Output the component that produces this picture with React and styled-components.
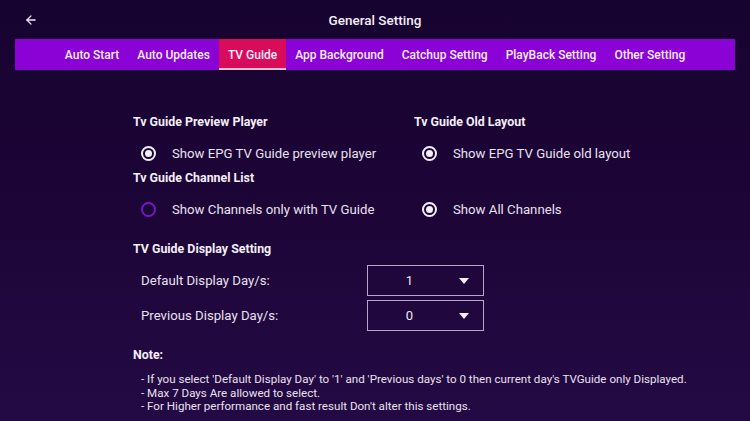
import React from "react";
import styled, { createGlobalStyle } from "styled-components";
import { ArrowLeft } from "lucide-react";

const tabs = [
  "Auto Start",
  "Auto Updates",
  "TV Guide",
  "App Background",
  "Catchup Setting",
  "PlayBack Setting",
  "Other Setting",
];

const notes = [
  "- If you select 'Default Display Day' to '1' and 'Previous days' to 0 then current day's TVGuide only Displayed.",
  "- Max 7 Days Are allowed to select.",
  "- For Higher performance and fast result Don't alter this settings.",
];

function Radio({ checked, label }) {
  return (
    <RadioRow>
      <RadioCircle checked={checked} />
      <RadioLabel>{label}</RadioLabel>
    </RadioRow>
  );
}

function Dropdown({ label, value }) {
  return (
    <DropRow>
      <DropLabel>{label}</DropLabel>
      <DropBox>
        <DropValue>{value}</DropValue>
        <DropArrow />
      </DropBox>
    </DropRow>
  );
}

export default function App() {
  return (
    <>
      <GlobalStyle />
      <Page>
        <Header>
          <BackButton>
            <ArrowLeft size={14} strokeWidth={2.2} />
          </BackButton>
          <Title>General Setting</Title>
          <span />
        </Header>
        <TabBar>
          {tabs.map((t) => (
            <Tab key={t} active={t === "TV Guide"}>
              {t}
            </Tab>
          ))}
        </TabBar>
        <Content>
          <OptionGrid>
            <Cell>
              <Heading>Tv Guide Preview Player</Heading>
              <Radio checked label="Show EPG TV Guide preview player" />
            </Cell>
            <Cell>
              <Heading>Tv Guide Old Layout</Heading>
              <Radio checked label="Show EPG TV Guide old layout" />
            </Cell>
            <Cell>
              <Heading>Tv Guide Channel List</Heading>
              <Radio label="Show Channels only with TV Guide" />
            </Cell>
            <Cell>
              <Heading />
              <Radio checked label="Show All Channels" />
            </Cell>
          </OptionGrid>

          <Section>
            <Heading>TV Guide Display Setting</Heading>
            <DropList>
              <Dropdown label="Default Display Day/s:" value="1" />
              <Dropdown label="Previous Display Day/s:" value="0" />
            </DropList>
          </Section>

          <NoteSection>
            <NoteTitle>Note:</NoteTitle>
            <NoteList>
              {notes.map((n) => (
                <NoteLine key={n}>{n}</NoteLine>
              ))}
            </NoteList>
          </NoteSection>
        </Content>
      </Page>
    </>
  );
}

const GlobalStyle = createGlobalStyle`
  html, body {
    margin: 0;
    padding: 0;
  }
  body {
    font-family: Roboto, "Noto Sans", "Liberation Sans", sans-serif;
    color: #f1e9f6;
  }
`;

const Page = styled.div`
  width: 750px;
  height: 421px;
  overflow: hidden;
  background: linear-gradient(180deg, #170330 0%, #1d0538 55%, #240a44 100%);
`;

const Header = styled.div`
  height: 39px;
  display: grid;
  grid-template-columns: 1fr auto 1fr;
  align-items: center;
`;

const BackButton = styled.div`
  display: flex;
  align-items: center;
  padding-left: 24px;
  color: #f1e9f6;
`;

const Title = styled.div`
  font-size: 13.5px;
  font-weight: 500;
  color: #f4eef8;
`;

const TabBar = styled.div`
  margin: 0 15px;
  height: 31px;
  background: #8a02d6;
  display: flex;
  justify-content: center;
  align-items: stretch;
`;

const Tab = styled.div`
  display: flex;
  align-items: center;
  padding: 0 9px;
  font-size: 12px;
  font-weight: 500;
  color: #f6eefb;
  background: ${(p) => (p.active ? "#d90b5b" : "transparent")};
  box-shadow: ${(p) => (p.active ? "inset 0 -2px 0 #f6bdd2" : "none")};
`;

const Content = styled.div`
  padding: 42px 0 0 133px;
`;

const OptionGrid = styled.div`
  display: grid;
  grid-template-columns: 281px auto;
`;

const Cell = styled.div`
  display: flex;
  flex-direction: column;
`;

const Heading = styled.div`
  height: 20px;
  line-height: 20px;
  margin-bottom: 6px;
  font-size: 12.4px;
  font-weight: 700;
  color: #f4eef8;
`;

const RadioRow = styled.div`
  height: 30px;
  display: flex;
  align-items: center;
  gap: 16px;
  padding-left: 8px;
`;

const RadioCircle = styled.span`
  box-sizing: border-box;
  width: 15px;
  height: 15px;
  border-radius: 50%;
  border: 2px solid ${(p) => (p.checked ? "#f4eef8" : "#7419c2")};
  display: flex;
  align-items: center;
  justify-content: center;
  &::after {
    content: "";
    width: 7px;
    height: 7px;
    border-radius: 50%;
    background: #f4eef8;
    display: ${(p) => (p.checked ? "block" : "none")};
  }
`;

const RadioLabel = styled.span`
  font-size: 13.2px;
  color: #e9e1ef;
`;

const Section = styled.div`
  margin-top: 15px;
`;

const DropList = styled.div`
  display: flex;
  flex-direction: column;
  gap: 4px;
`;

const DropRow = styled.div`
  display: flex;
  align-items: center;
`;

const DropLabel = styled.div`
  width: 226px;
  padding-left: 8px;
  font-size: 13.2px;
  color: #e9e1ef;
`;

const DropBox = styled.div`
  box-sizing: border-box;
  width: 117px;
  height: 31px;
  border: 1.5px solid #b8a3c9;
  display: flex;
  align-items: center;
`;

const DropValue = styled.div`
  flex: 1;
  text-align: center;
  padding-left: 4px;
  font-size: 13px;
  color: #efe7f4;
`;

const DropArrow = styled.span`
  width: 0;
  height: 0;
  margin: 0 14px 0 12px;
  border-left: 5.5px solid transparent;
  border-right: 5.5px solid transparent;
  border-top: 6px solid #f4eef8;
`;

const NoteSection = styled.div`
  margin-top: 14px;
`;

const NoteTitle = styled.div`
  height: 20px;
  line-height: 20px;
  font-size: 12.4px;
  font-weight: 700;
  color: #f4eef8;
`;

const NoteList = styled.div`
  margin-top: 8px;
  padding-left: 8px;
`;

const NoteLine = styled.div`
  font-size: 11.6px;
  line-height: 13.5px;
  color: #e9e1ef;
`;
